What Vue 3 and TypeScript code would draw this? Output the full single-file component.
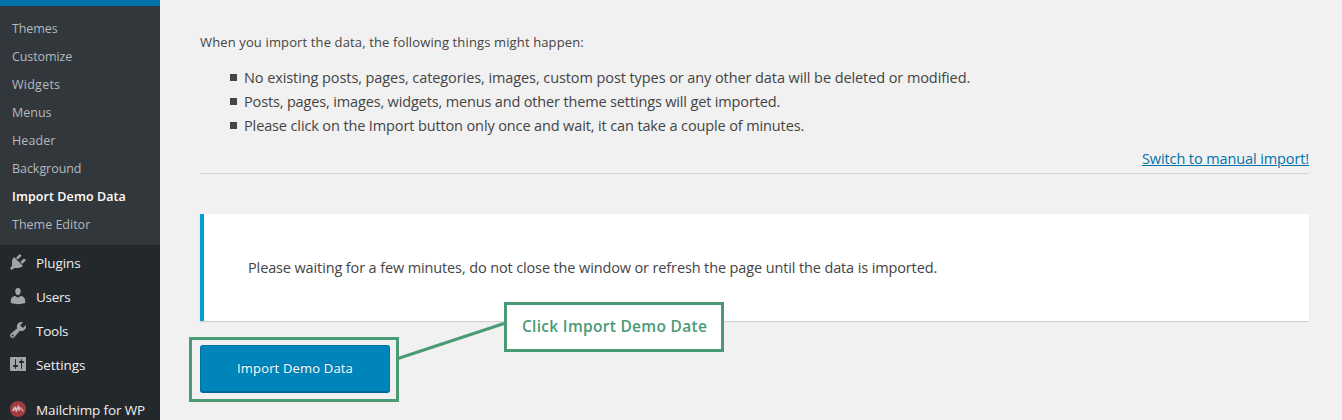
<script setup lang="ts">
const submenu = [
  { label: 'Themes', cls: 'themes' },
  { label: 'Customize', cls: 'customize' },
  { label: 'Widgets', cls: 'widgets' },
  { label: 'Menus', cls: 'menus' },
  { label: 'Header', cls: 'header' },
  { label: 'Background', cls: 'background' },
  { label: 'Import Demo Data', cls: 'current' },
  { label: 'Theme Editor', cls: 'editor' },
]

const menu = [
  {
    label: 'Plugins',
    cls: 'plugins',
    path: 'M13.11 4.36L9.87 7.6 8 5.73l3.24-3.24c.35-.34 1.05-.2 1.56.32.52.51.66 1.21.31 1.55zm-8 1.77l.91-1.12 9.01 9.01-1.19.84c-.71.71-2.63 1.16-3.82 1.16H6.14L4.9 17.26c-.59.59-1.54.59-2.12 0-.59-.58-.59-1.53 0-2.12l1.24-1.24v-3.88c0-1.13.4-3.19 1.09-3.89zm7.26 3.97l3.24-3.24c.34-.35 1.04-.21 1.55.31.52.51.66 1.21.31 1.55l-3.24 3.25z',
  },
  {
    label: 'Users',
    cls: 'users',
    path: 'M10 9.25c-2.27 0-2.73-3.44-2.73-3.44C7 4.02 7.82 2 9.97 2c2.16 0 2.98 2.02 2.71 3.81 0 0-.41 3.44-2.68 3.44zm0 2.57L12.72 10c2.39 0 4.52 2.33 4.52 4.53v2.49s-3.65 1.13-7.24 1.13c-3.65 0-7.24-1.13-7.24-1.13v-2.49c0-2.25 1.94-4.48 4.47-4.48z',
  },
  {
    label: 'Tools',
    cls: 'tools',
    path: 'M16.68 9.77c-1.34 1.34-3.3 1.67-4.95.99l-5.41 6.52c-.99.99-2.59.99-3.58 0s-.99-2.59 0-3.57l6.52-5.42c-.68-1.65-.35-3.61.99-4.95 1.28-1.28 3.12-1.62 4.72-1.06l-2.89 2.89 2.82 2.82 2.86-2.87c.53 1.58.18 3.39-1.08 4.65zM3.81 16.21c.4.39 1.04.39 1.43 0 .4-.4.4-1.04 0-1.43-.39-.4-1.03-.4-1.43 0-.39.39-.39 1.03 0 1.43z',
  },
  {
    label: 'Settings',
    cls: 'settings',
    path: 'M18 16V4c0-.55-.45-1-1-1H3c-.55 0-1 .45-1 1v12c0 .55.45 1 1 1h14c.55 0 1-.45 1-1zM8 11h1c.55 0 1 .45 1 1s-.45 1-1 1H8v1.5c0 .28-.22.5-.5.5s-.5-.22-.5-.5V13H6c-.55 0-1-.45-1-1s.45-1 1-1h1V5.5c0-.28.22-.5.5-.5s.5.22.5.5V11zm5-2h-1c-.55 0-1-.45-1-1s.45-1 1-1h1V5.5c0-.28.22-.5.5-.5s.5.22.5.5V7h1c.55 0 1 .45 1 1s-.45 1-1 1h-1v5.5c0 .28-.22.5-.5.5s-.5-.22-.5-.5V9z',
  },
]

const notes = [
  { text: 'No existing posts, pages, categories, images, custom post types or any other data will be deleted or modified.', cls: 'n1' },
  { text: 'Posts, pages, images, widgets, menus and other theme settings will get imported.', cls: 'n2' },
  { text: 'Please click on the Import button only once and wait, it can take a couple of minutes.', cls: 'n3' },
]
</script>

<template>
  <div class="page">
    <nav class="sidebar">
      <div class="active-bar"></div>
      <ul class="submenu">
        <li v-for="item in submenu" :key="item.label" :class="item.cls">{{ item.label }}</li>
      </ul>
      <ul class="menu">
        <li v-for="item in menu" :key="item.label" :class="item.cls">
          <svg class="icon" viewBox="0 0 20 20"><path :d="item.path" /></svg>
          <span>{{ item.label }}</span>
        </li>
        <li class="mailchimp">
          <svg class="icon" viewBox="0 0 20 20">
            <circle cx="10" cy="10" r="8" fill="#a23a41" />
            <path d="M4.8 12 6.9 8.6l1.4 2.8 1.9-3.5 1.4 3.7" fill="none" stroke="#d8bcbc" stroke-width="1.9" />
            <path d="M11.6 8.2q2.2 1 3.6 4.2" fill="none" stroke="#d8bcbc" stroke-width="1.2" />
          </svg>
          <span>Mailchimp for WP</span>
        </li>
      </ul>
    </nav>

    <main class="content">
      <p class="intro">When you import the data, the following things might happen:</p>
      <ul class="notes">
        <li v-for="note in notes" :key="note.cls" :class="note.cls">{{ note.text }}</li>
      </ul>
      <div class="switch"><a>Switch to manual import!</a></div>
      <section class="notice">
        <p>Please waiting for a few minutes, do not close the window or refresh the page until the data is imported.</p>
      </section>
      <button class="import">Import Demo Data</button>
    </main>

    <div class="highlight"></div>
    <svg class="connector" viewBox="0 0 110 42"><path d="M2 37.5 108 2.5" stroke="#4a9a75" stroke-width="3" /></svg>
    <div class="callout">Click Import Demo Date</div>
  </div>
</template>

<style>
body {
  background: #f1f1f1;
}
</style>

<style scoped>
.page {
  position: relative;
  display: flex;
  width: 1342px;
  height: 420px;
  overflow: hidden;
  background: #f1f1f1;
  color: #444;
  font-family: "Open Sans", "Noto Sans", sans-serif;
}
ul, p {
  margin: 0;
  padding: 0;
  list-style: none;
}
.sidebar {
  flex: none;
  width: 160px;
  background: #23282d;
}
.active-bar {
  height: 6px;
  background: #0073aa;
}
.submenu {
  height: 230px;
  padding-top: 9px;
  background: #32373c;
}
.submenu li {
  height: 28px;
  padding-left: 12px;
  color: #b4b9be;
  font-size: 12.5px;
  line-height: 28px;
  letter-spacing: -0.05px;
  white-space: nowrap;
}
.submenu .themes, .submenu .customize { letter-spacing: -0.1px; }
.submenu .widgets { letter-spacing: 0.25px; }
.submenu .menus { letter-spacing: 0; }
.submenu .header { letter-spacing: 0.1px; }
.submenu .editor { letter-spacing: 0; }
.submenu .current {
  color: #fff;
  font-weight: 600;
  letter-spacing: 0.09px;
}
.menu li {
  display: flex;
  align-items: center;
  gap: 8px;
  height: 34px;
  padding-left: 8px;
  color: #eee;
  font-size: 13.5px;
  line-height: 34px;
  letter-spacing: -0.1px;
  white-space: nowrap;
}
.menu span {
  padding-top: 2px;
  line-height: 32px;
}
.menu .users { letter-spacing: -0.3px; }
.menu .tools { letter-spacing: -0.25px; }
.menu .mailchimp {
  margin-top: 11px;
  letter-spacing: -0.13px;
}
.icon {
  flex: none;
  width: 20px;
  height: 20px;
  fill: #a0a5aa;
}
.content {
  width: 1109px;
  margin-left: 40px;
}
.intro {
  margin-top: 32px;
  font-size: 13px;
  line-height: 20px;
  letter-spacing: 0.13px;
}
.notes {
  margin-top: 13px;
  padding-left: 30px;
}
.notes li {
  display: flex;
  align-items: center;
  gap: 7px;
  height: 24px;
  font-size: 14.5px;
  white-space: nowrap;
}
.notes li::before {
  width: 7px;
  height: 7px;
  background: #444;
  content: "";
}
.notes .n1 { letter-spacing: -0.085px; }
.notes .n2 { letter-spacing: -0.15px; }
.notes .n3 { letter-spacing: -0.125px; }
.switch {
  height: 36px;
  border-bottom: 1px solid #d5d5d5;
  font-size: 14.5px;
  line-height: 44px;
  letter-spacing: -0.11px;
  text-align: right;
}
.switch a {
  color: #0073aa;
  text-decoration: underline;
}
.notice {
  display: flex;
  align-items: center;
  box-sizing: border-box;
  height: 107px;
  margin-top: 40px;
  padding-left: 44px;
  border-left: 4px solid #00a0d2;
  background: #fff;
  box-shadow: 0 1px 1px rgba(0, 0, 0, 0.12);
  font-size: 14.5px;
  letter-spacing: -0.127px;
}
.import {
  display: block;
  width: 190px;
  height: 47px;
  margin-top: 24px;
  padding: 0 0 1px;
  border: 1px solid #0073aa;
  border-bottom-color: #006799;
  border-radius: 3px;
  background: #0085ba;
  box-shadow: 0 1px 0 #006799;
  color: #fff;
  font-family: inherit;
  font-size: 13px;
  letter-spacing: 0.17px;
  text-shadow: 0 -1px 1px #006799;
}
.highlight {
  position: absolute;
  left: 189px;
  top: 337px;
  box-sizing: border-box;
  width: 210px;
  height: 65px;
  border: 3px solid #4a9a75;
}
.connector {
  position: absolute;
  left: 396px;
  top: 321px;
  width: 110px;
  height: 42px;
}
.callout {
  position: absolute;
  left: 504px;
  top: 302px;
  box-sizing: border-box;
  width: 220px;
  height: 50px;
  padding-left: 15px;
  border: 3px solid #4a9a75;
  background: #fff;
  color: #4a9a75;
  font-size: 15.5px;
  font-weight: 600;
  line-height: 43px;
  letter-spacing: 0.3px;
  white-space: nowrap;
}
</style>
